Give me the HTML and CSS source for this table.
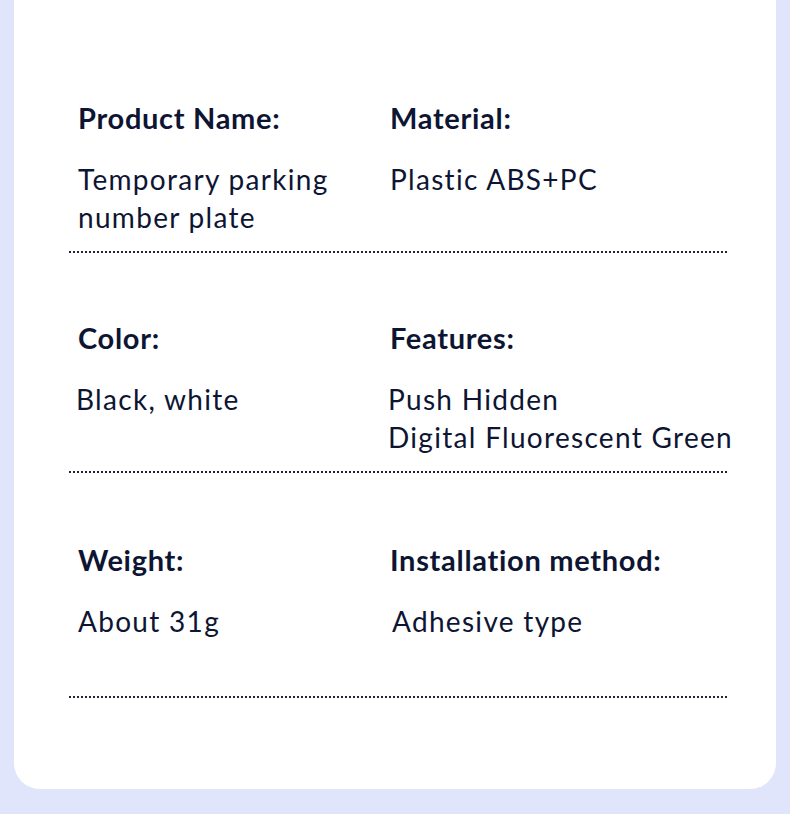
FILE: index.html
```html
<!DOCTYPE html>
<html lang="en">
<head>
<meta charset="utf-8">
<title>Product specs</title>
<link rel="stylesheet" href="styles.css">
</head>
<body>
<main class="card">
  <section class="spec-row">
    <div class="spec">
      <h3 class="label">Product Name:</h3>
      <p class="value">Temporary parking<br>number plate</p>
    </div>
    <div class="spec">
      <h3 class="label">Material:</h3>
      <p class="value">Plastic ABS+PC</p>
    </div>
  </section>
  <section class="spec-row">
    <div class="spec">
      <h3 class="label">Color:</h3>
      <p class="value shift-left">Black, white</p>
    </div>
    <div class="spec">
      <h3 class="label">Features:</h3>
      <p class="value shift-left">Push Hidden<br>Digital Fluorescent Green</p>
    </div>
  </section>
  <section class="spec-row last">
    <div class="spec">
      <h3 class="label">Weight:</h3>
      <p class="value">About 31g</p>
    </div>
    <div class="spec">
      <h3 class="label">Installation method:</h3>
      <p class="value shift-right">Adhesive type</p>
    </div>
  </section>
</main>
</body>
</html>
```
FILE: styles.css
```css
* { box-sizing: border-box; }
html, body { margin: 0; padding: 0; }
body {
  background: #e0e5fc;
  padding: 0 14px;
  font-family: "Lato", "Source Sans Pro", "Noto Sans", sans-serif;
  color: #0d1533;
  height: 814px;
  overflow: hidden;
}
.card {
  background: #ffffff;
  height: 789px;
  border-radius: 0 0 26px 26px;
  padding: 33px 47px 0 55px;
}
.spec-row {
  display: grid;
  grid-template-columns: 312px 1fr;
  padding: 66px 0 17px 9px;
  background-image: linear-gradient(to right, #1f2433 50%, transparent 50%);
  background-size: 4px 2px;
  background-repeat: repeat-x;
  background-position: left bottom;
}
.spec-row.last { padding-top: 68px; padding-bottom: 20px; }
.spec { display: flex; flex-direction: column; gap: 23px; min-width: 0; }
.label {
  margin: 0;
  font-size: 29px;
  line-height: 38px;
  font-weight: 700;
  letter-spacing: 0.7px;
  white-space: nowrap;
}
.value {
  margin: 0;
  font-size: 28px;
  line-height: 38px;
  font-weight: 400;
  letter-spacing: 1.3px;
  min-height: 76px;
  white-space: nowrap;
}
.shift-left { margin-left: -2px; }
.shift-right { margin-left: 2px; }
```
